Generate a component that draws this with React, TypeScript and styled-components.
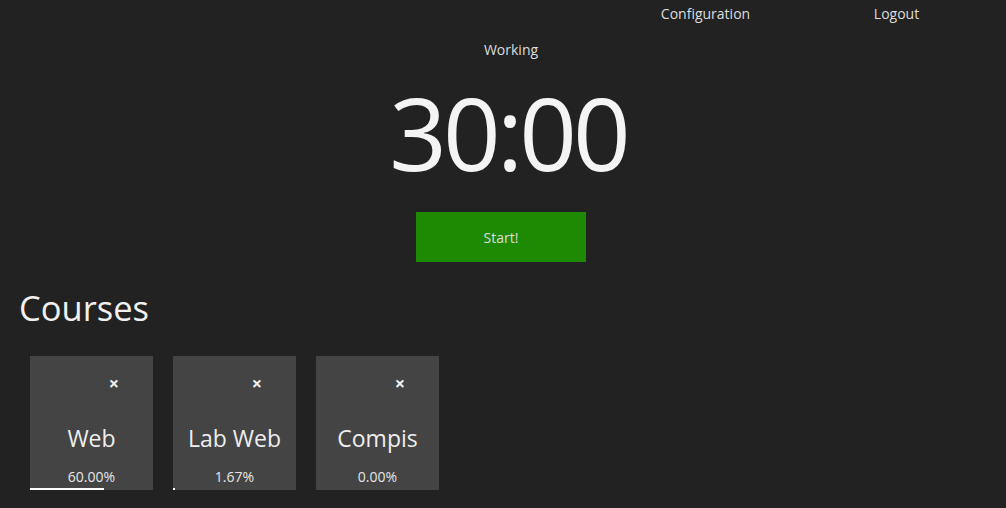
import React from "react";
import styled, { createGlobalStyle } from "styled-components";

const Global = createGlobalStyle`
  html, body { margin: 0; padding: 0; background: #222222; }
  body { font-family: "Open Sans", "Noto Sans", sans-serif; color: #e8e8e8; }
  * { box-sizing: border-box; }
`;

const Page = styled.div`
  width: 1006px;
  height: 508px;
  overflow: hidden;
  background: #222222;
  display: flex;
  flex-direction: column;
`;

const Nav = styled.nav`
  display: flex;
  justify-content: flex-end;
  padding: 4px 14px 0 0;
  height: 28px;
`;

const NavItem = styled.a`
  width: 191px;
  text-align: center;
  font-size: 14px;
  line-height: 20px;
  color: #dddddd;
  text-decoration: none;
  cursor: pointer;
`;

const Timer = styled.section`
  display: flex;
  flex-direction: column;
  align-items: center;
`;

const Mode = styled.div`
  margin-top: 12px;
  font-size: 14px;
  line-height: 20px;
  color: #dddddd;
  margin-left: 16px;
`;

const Clock = styled.div`
  margin-top: 7px;
  margin-left: 10px;
  font-size: 101px;
  line-height: 130px;
  letter-spacing: -4px;
  color: #f4f4f4;
  font-weight: 400;
`;

const StartButton = styled.button`
  margin-top: 15px;
  margin-right: 4px;
  width: 170px;
  height: 50px;
  border: none;
  background: #1e8a03;
  color: #dddddd;
  font-family: inherit;
  font-size: 14px;
  cursor: pointer;
`;

const Courses = styled.section`
  padding: 0 20px;
`;

const Heading = styled.h1`
  margin: 21px 0 0 -1px;
  font-size: 34.5px;
  line-height: 50px;
  font-weight: 400;
  color: #f0f0f0;
`;

const CardRow = styled.div`
  display: flex;
  gap: 20px;
  padding: 0 10px;
  margin-top: 23px;
`;

const Card = styled.div`
  width: 123px;
  height: 134px;
  background: #444444;
  display: flex;
  flex-direction: column;
  align-items: stretch;
`;

const CloseRow = styled.div`
  height: 54px;
  display: flex;
  align-items: center;
  justify-content: flex-end;
  padding-right: 34px;
`;

const Close = styled.span`
  font-size: 18px;
  font-weight: 700;
  color: #f0f0f0;
  cursor: pointer;
  line-height: 1;
`;

const Title = styled.div`
  margin-top: 10px;
  text-align: center;
  font-size: 23px;
  line-height: 36px;
  color: #eeeeee;
  white-space: nowrap;
`;

const Percent = styled.div`
  margin-top: 11px;
  text-align: center;
  font-size: 14px;
  line-height: 20px;
  color: #e6e6e6;
`;

const Bar = styled.div`
  margin-top: auto;
  height: 2px;
  background: #ffffff;
`;

const courses = [
  { name: "Web", progress: 60 },
  { name: "Lab Web", progress: 1.67 },
  { name: "Compis", progress: 0 },
];

export default function App() {
  return (
    <Page>
      <Global />
      <Nav>
        <NavItem>Configuration</NavItem>
        <NavItem>Logout</NavItem>
      </Nav>
      <Timer>
        <Mode>Working</Mode>
        <Clock>30:00</Clock>
        <StartButton>Start!</StartButton>
      </Timer>
      <Courses>
        <Heading>Courses</Heading>
        <CardRow>
          {courses.map((c) => (
            <Card key={c.name}>
              <CloseRow>
                <Close>×</Close>
              </CloseRow>
              <Title>{c.name}</Title>
              <Percent>{c.progress.toFixed(2)}%</Percent>
              <Bar style={{ width: `${c.progress}%` }} />
            </Card>
          ))}
        </CardRow>
      </Courses>
    </Page>
  );
}
